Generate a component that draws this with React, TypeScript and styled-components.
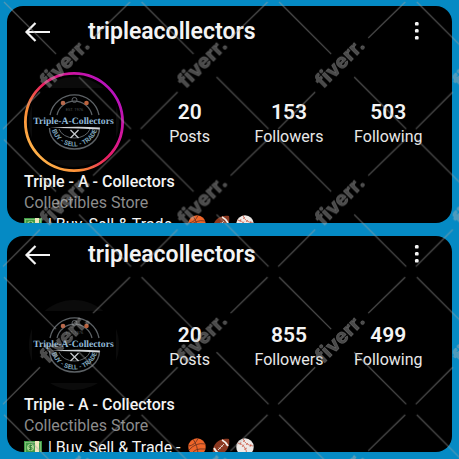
import React from "react";
import styled, { createGlobalStyle } from "styled-components";

const GlobalStyle = createGlobalStyle`
  *, *::before, *::after { box-sizing: border-box; }
  body { margin: 0; background: #058ac4; font-family: Roboto, "Liberation Sans", sans-serif; }
`;

const Page = styled.main`
  position: relative;
  display: grid;
  gap: 13px;
  min-height: 100vh;
  align-content: start;
  padding: 6px 7px 7px;
  overflow: hidden;
`;

const Panel = styled.section<{ $top: number }>`
  padding: ${(p) => p.$top}px 14px 0 17px;
  overflow: hidden;
  border-radius: 16px;
  background: #000;
  color: #f4f4f4;
`;

const Header = styled.header`
  display: flex;
  align-items: center;
  height: 32px;
`;

const IconButton = styled.button`
  display: flex;
  flex: none;
  padding: 0;
  border: 0;
  background: none;
  color: #f4f4f4;
`;

const MoreButton = styled(IconButton)`
  margin-right: 17px;
`;

const Title = styled.h1`
  flex: 1;
  margin: 0 0 0 36px;
  font-size: 23px;
  line-height: 32px;
  font-weight: 600;
`;

const Summary = styled.div`
  display: flex;
  align-items: center;
  margin-top: 24px;
`;

const Avatar = styled.div`
  display: flex;
  flex: none;
  width: 100px;
  height: 100px;
  margin-right: 16px;
`;

const Stats = styled.dl`
  display: grid;
  flex: 1;
  grid-template-columns: repeat(3, 1fr);
  margin: 0;
  padding-top: 4px;
`;

const Stat = styled.div`
  display: flex;
  flex-direction: column-reverse;
  text-align: center;
`;

const StatLabel = styled.dt`
  font-size: 16px;
  line-height: 24px;
  color: #e8e8e8;
`;

const StatValue = styled.dd`
  margin: 0;
  font-size: 21px;
  line-height: 26px;
  font-weight: 600;
`;

const Name = styled.h2`
  margin: 0;
  font-size: 16px;
  line-height: 20px;
  font-weight: 500;
`;

const Category = styled.p`
  margin: 0;
  font-size: 16px;
  line-height: 22px;
  color: #8c8c8c;
`;

const Bio = styled.p<{ $visible: number }>`
  display: flex;
  height: ${(p) => p.$visible}px;
  margin: 0;
  overflow: hidden;
  font-size: 16px;
  line-height: 22px;
  white-space: pre;
`;

const BioText = styled.span`
  margin-left: 2px;
`;

const Emojis = styled.span`
  display: flex;
  gap: 6px;
  margin-left: 7px;
`;

const Watermark = styled.svg`
  position: absolute;
  inset: 0;
  width: 100%;
  height: 100%;
  pointer-events: none;
`;

const BackIcon = () => (
  <svg width="28" height="24" viewBox="0 0 28 24" fill="none" stroke="currentColor" strokeWidth="2.2">
    <path d="M26 12H3M11.500 3L2.500 12L11.500 21" />
  </svg>
);

const MoreIcon = () => (
  <svg width="8" height="24" viewBox="0 0 8 24" fill="currentColor">
    <rect x="2" y="2" width="3.6" height="3.6" rx="1.2" />
    <rect x="2" y="9" width="3.6" height="3.6" rx="1.2" />
    <rect x="2" y="16" width="3.6" height="3.6" rx="1.2" />
  </svg>
);

const StoreLogo = ({ id, ring }: { id: string; ring: boolean }) => (
  <svg width="100" height="100" viewBox="0 0 100 100">
    <defs>
      <linearGradient id={`${id}-ring`} x1="0.1" y1="0.85" x2="0.9" y2="0.15">
        <stop offset="0" stopColor="#ffb34a" />
        <stop offset="0.25" stopColor="#fb8a35" />
        <stop offset="0.5" stopColor="#e9205f" />
        <stop offset="0.75" stopColor="#d3169b" />
        <stop offset="1" stopColor="#b512c0" />
      </linearGradient>
      <path id={`${id}-arc`} d="M27 52A23.500 22.500 0 0 0 74 52" />
      <clipPath id={`${id}-disc`}>
        <circle cx="50" cy="50" r="45" />
      </clipPath>
    </defs>
    <g clipPath={`url(#${id}-disc)`} fill="#0b0b0b">
      <rect x="0" y="0" width="100" height="16" />
      <rect x="0" y="88" width="100" height="12" />
      <rect x="0" y="0" width="8" height="100" />
      <rect x="92" y="0" width="8" height="100" />
    </g>
    {ring && <circle cx="50" cy="50" r="48.6" fill="none" stroke={`url(#${id}-ring)`} strokeWidth="2.8" />}
    <g fill="none" stroke="#5d6266">
      <path d="M26 43A25 25 0 0 1 75 43" strokeWidth="1.3" />
      <path d="M33 43A18 18 0 0 1 68 43" strokeWidth="1.2" />
      <path d="M25.5 56A25 21 0 0 0 75.5 56" strokeWidth="1.4" />
      <path d="M35 57A16 12 0 0 0 66 57" strokeWidth="1" />
      <circle cx="50.500" cy="28" r="2.500" strokeWidth="1" />
    </g>
    <circle cx="39" cy="31" r="2.300" fill="#b8694c" />
    <circle cx="62.500" cy="31" r="2.300" fill="#bd633d" />
    <text x="50.500" y="39" textAnchor="middle" fontSize="4" fill="#4d5052" fontFamily="Roboto, sans-serif">EST. 1976</text>
    <text x="49.500" y="52" textAnchor="middle" fontSize="9.700" fontWeight="700" fill="#91b9d7" fontFamily="'Liberation Serif', serif" textRendering="geometricPrecision">
      Triple-A-Collectors
    </text>
    <path d="M26 56Q50 54 76 55.500L75.500 57.500Q50 55.500 26 56Z" fill="#d0d4d7" />
    <path d="M46.500 58L54.500 66M54.500 58L46.500 66" stroke="#c5c9cc" strokeWidth="1.3" />
    <text fontSize="6.500" fontWeight="700" fill="#7fa4ba" fontFamily="Roboto, sans-serif" textRendering="geometricPrecision">
      <textPath href={`#${id}-arc`} startOffset="50%" textAnchor="middle">BUY - SELL - TRADE</textPath>
    </text>
  </svg>
);

const MoneyIcon = () => (
  <svg width="18" height="20" viewBox="0 0 18 20">
    <rect y="4" width="18" height="13" fill="#3f9b46" />
    <rect x="1.500" y="5.500" width="15" height="10" fill="none" stroke="#8ac87e" strokeWidth="0.8" />
    <rect x="11" y="4" width="4" height="13" fill="#f0e5bd" />
    <circle cx="6.500" cy="10.500" r="3.500" fill="#a4d38c" />
    <path d="M8 8.500H6A1 1 0 0 0 6 10.500H7A1 1 0 0 1 7 12.500H5M6.500 7.500V13.500" fill="none" stroke="#2c7a35" strokeWidth="0.9" />
  </svg>
);

const BasketballIcon = () => (
  <svg width="18" height="20" viewBox="0 0 18 20">
    <circle cx="9" cy="10" r="8.700" fill="#ee6529" />
    <path d="M1 13Q8 5 17 7M5 2Q10 9 10 18.500M10 1.500Q7 8 1 9M4 17Q6 11 17 12" fill="none" stroke="#65301f" strokeWidth="0.8" />
  </svg>
);

const FootballIcon = () => (
  <svg width="18" height="20" viewBox="0 0 18 20">
    <path d="M1 18C-1 8 7 0 17 2C19 12 11 20 1 18Z" fill="#8b3820" />
    <path d="M10 3Q14 5 16 9M2 11Q4 15 8 17.500" fill="none" stroke="#f3eee8" strokeWidth="1.800" />
    <path d="M6 13L12 7M7 10.500L8.500 12M9 8.500L10.500 10" stroke="#f3eee8" strokeWidth="0.8" />
  </svg>
);

const BaseballIcon = () => (
  <svg width="18" height="20" viewBox="0 0 18 20">
    <circle cx="9" cy="10" r="8.700" fill="#eee9e6" />
    <path d="M1.500 6Q10 7 11 18M7 1.500Q9 8 17 9" fill="none" stroke="#cb5a46" strokeWidth="0.8" />
    <path d="M5 5L4 8M8 7.500L6 10M11 11L8 12.500M9 3L7 5M12 6L10 8M15 7L14 10" stroke="#cb5a46" strokeWidth="0.7" />
  </svg>
);

type Snapshot = { id: string; top: number; bio: number; ring: boolean; followers: number; following: number };

const snapshots: Snapshot[] = [
  { id: "before", top: 10, bio: 9, ring: true, followers: 153, following: 503 },
  { id: "after", top: 3, bio: 15, ring: false, followers: 855, following: 499 },
];

const Profile = ({ id, top, bio, ring, followers, following }: Snapshot) => (
  <Panel $top={top}>
    <Header>
      <IconButton aria-label="Back"><BackIcon /></IconButton>
      <Title>tripleacollectors</Title>
      <MoreButton aria-label="More options"><MoreIcon /></MoreButton>
    </Header>
    <Summary>
      <Avatar><StoreLogo id={id} ring={ring} /></Avatar>
      <Stats>
        <Stat><StatLabel>Posts</StatLabel><StatValue>20</StatValue></Stat>
        <Stat><StatLabel>Followers</StatLabel><StatValue>{followers}</StatValue></Stat>
        <Stat><StatLabel>Following</StatLabel><StatValue>{following}</StatValue></Stat>
      </Stats>
    </Summary>
    <Name>Triple - A - Collectors</Name>
    <Category>Collectibles Store</Category>
    <Bio $visible={bio}>
      <MoneyIcon />
      <BioText>{" | Buy, Sell & Trade -"}</BioText>
      <Emojis><BasketballIcon /><FootballIcon /><BaseballIcon /></Emojis>
    </Bio>
  </Panel>
);

export default function App() {
  return (
    <>
      <GlobalStyle />
      <Page>
        {snapshots.map((s) => <Profile key={s.id} {...s} />)}
        <Watermark aria-hidden="true">
          <defs>
            <pattern id="mark" width="137.6" height="137.6" patternUnits="userSpaceOnUse">
              <g stroke="#a0a0a0" strokeOpacity="0.48" strokeWidth="1.300">
                <path d="M4 2L56 54M79 77L131 129M130 2L93 38M40 92L3 129" />
              </g>
              <text transform="translate(48 89) rotate(-45)" fontFamily="Inter, sans-serif" fontSize="20" fontWeight="800" fill="#b0b0b0" stroke="#b0b0b0" strokeWidth="0.5" strokeOpacity="0.42" fillOpacity="0.42">fiverr.</text>
            </pattern>
          </defs>
          <rect width="100%" height="100%" fill="url(#mark)" />
        </Watermark>
      </Page>
    </>
  );
}
